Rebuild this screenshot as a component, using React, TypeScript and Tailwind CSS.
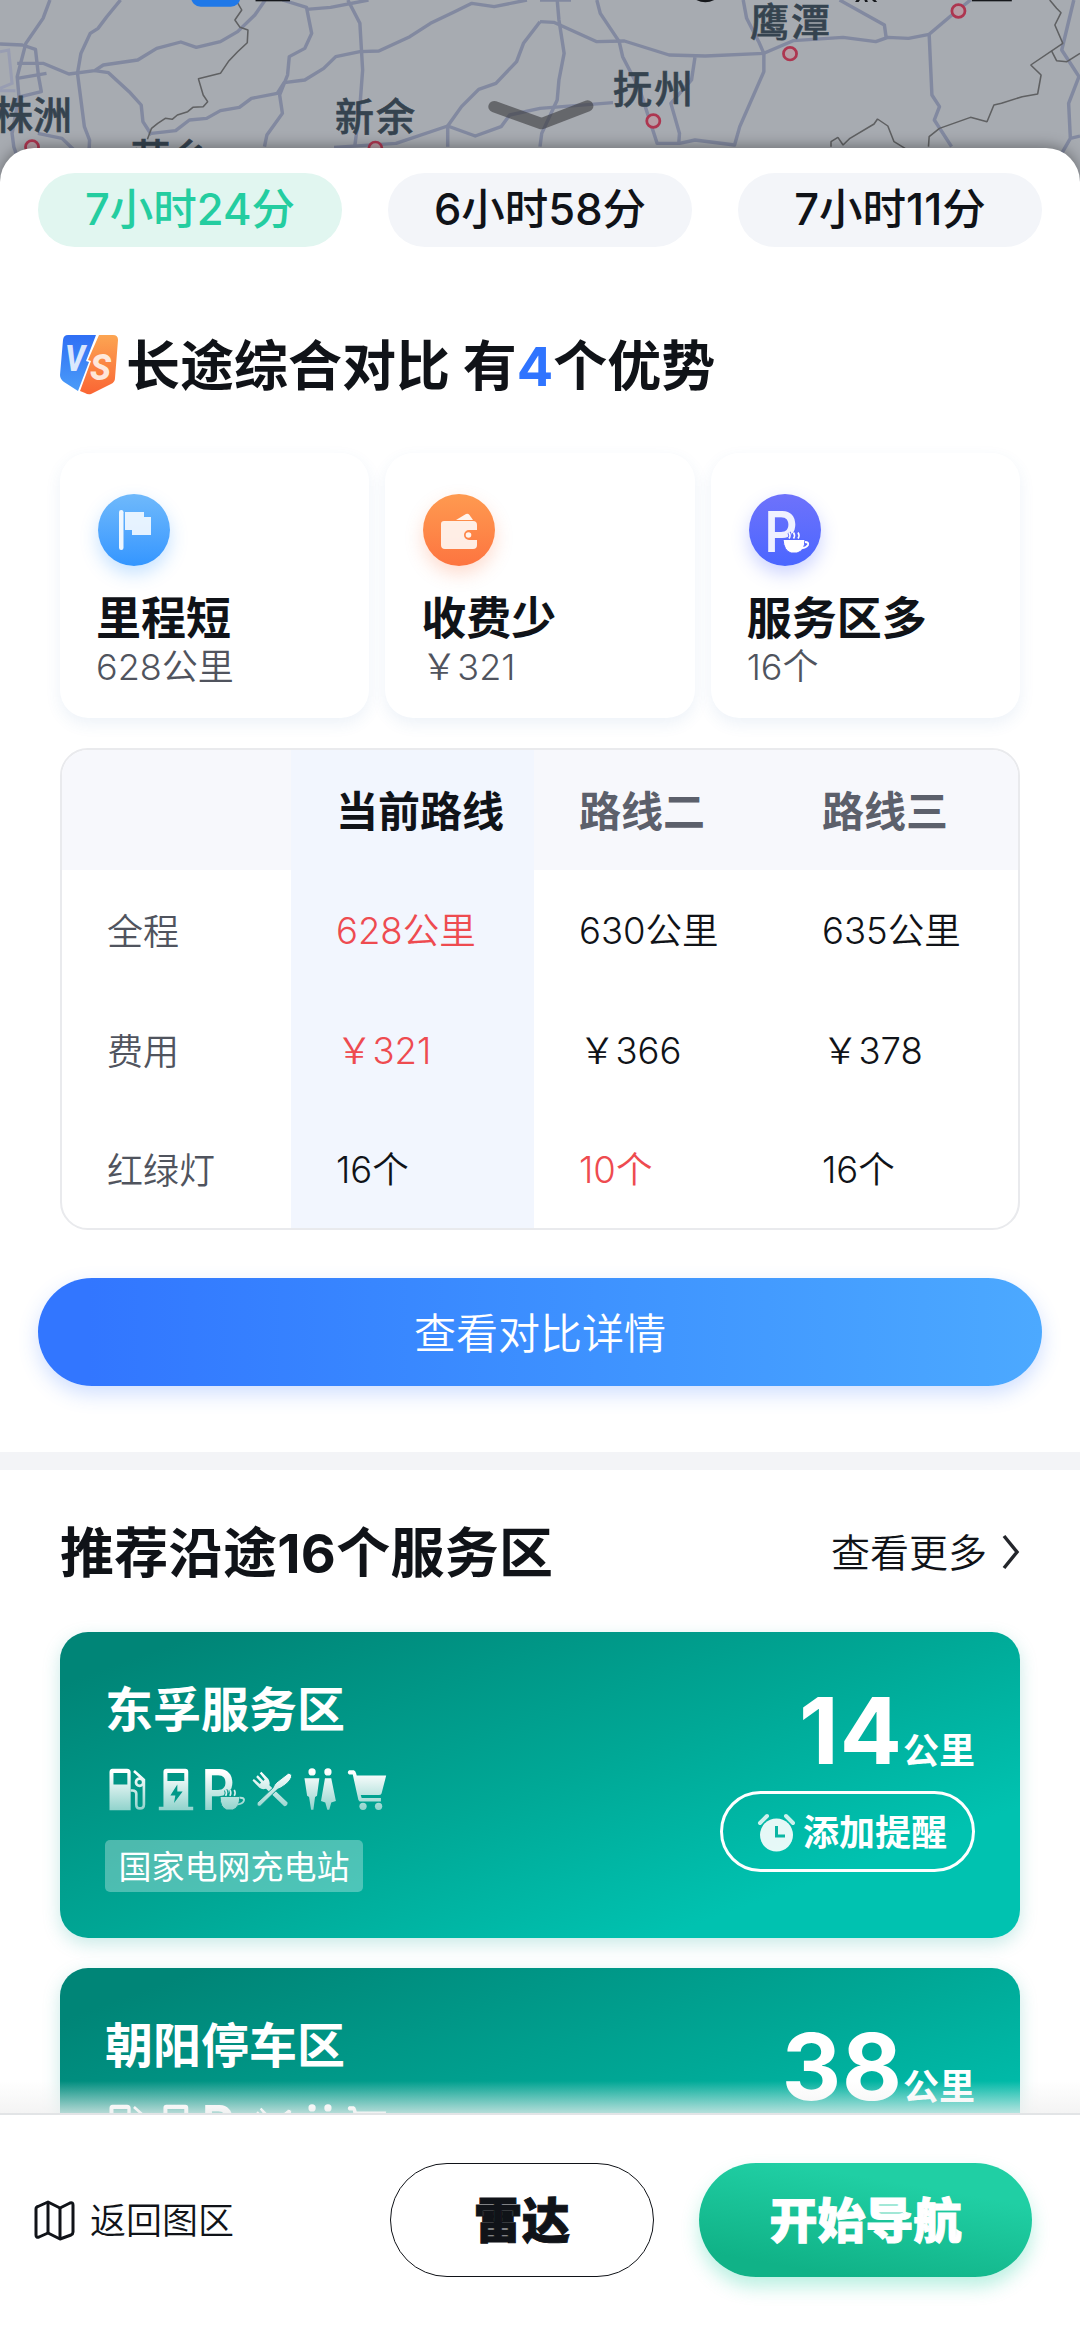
import type { ReactNode } from "react";

const durations = [
  { label: "7小时24分", active: true },
  { label: "6小时58分", active: false },
  { label: "7小时11分", active: false },
];

const tableRows = [
  { name: "全程", values: ["628公里", "630公里", "635公里"], best: 0 },
  { name: "费用", values: ["￥321", "￥366", "￥378"], best: 0 },
  { name: "红绿灯", values: ["16个", "10个", "16个"], best: 1 },
];

const serviceAreas: { name: string; distance: number; tag?: string }[] = [
  { name: "东孚服务区", distance: 14, tag: "国家电网充电站" },
  { name: "朝阳停车区", distance: 38 },
];

function MapBackground() {
  return (
    <div className="relative h-[190px] shrink-0 overflow-hidden bg-[#a7abb1]">
      <svg
        className="absolute inset-0 h-[190px] w-[1080px]"
        viewBox="0 0 3136 570"
        preserveAspectRatio="none"
        fill="none"
      >
        <g stroke="#8289a0" strokeWidth="10" strokeLinejoin="round">
          <path d="M145 0 L125 55 L75 130 L50 230 L55 290 L35 400 L40 440 L60 500" />
          <path d="M350 0 L310 50 L285 85 L262 100 L235 160 L225 220 L235 300 L245 380 L260 420 L258 470" />
          <path d="M0 132 L65 135 L103 148 L112 230 L120 275 L60 290" />
          <path d="M50 190 L125 190 L200 222 L275 212 L300 195 L400 180 L455 145 L525 126 L570 142 L640 125 L690 95 L740 45 L770 0" />
          <path d="M50 235 L135 220" />
          <path d="M275 212 L315 218 L375 275 L410 315 L415 365 L440 405" />
          <path d="M440 400 L510 392 L550 360 L600 355 L640 332 L695 322 L730 295 L805 280 L825 248 L885 240 L940 205 L975 170 L1045 155 L1100 153 L1190 110 L1250 70 L1320 35 L1370 10 L1435 20 L1530 0" />
          <path d="M820 0 L890 22 L905 100 L885 145 L840 170 L835 225 L812 285 L820 340 L775 405 L768 440" />
          <path d="M890 28 L960 22 L1070 0" />
          <path d="M1010 0 L1045 70 L1053 210 L1045 320 L1030 440" />
          <path d="M970 442 L1150 430 L1300 378 L1380 408 L1455 380 L1480 345 L1568 325 L1780 308" />
          <path d="M1300 440 V378 L1340 320 L1390 268 L1440 250 L1500 185 L1520 130 L1568 65" />
          <path d="M110 400 L180 415 L215 450" />
          <g transform="translate(1568 0)">
            <path d="M0 65 L40 67 L165 125 L245 123 L375 165 L480 168 L650 160 L735 122 L880 112 L975 125 L1010 112 L1070 115 L1130 103 L1190 50 L1250 0" />
            <path d="M50 0 L55 60 L70 160 L55 240 L50 300 L5 400 L0 440" />
            <path d="M0 0 L90 0 M165 0 L175 40 L230 125 L240 170 L290 270 L340 430 L405 430 L450 420 L565 435 L580 380 L650 215 L650 160 L635 125 L600 55 L590 0" />
            <path d="M450 172 L440 240 L380 310 L405 400 L403 430" />
            <path d="M870 0 L1000 75 L1005 112" />
            <path d="M1130 103 L1138 285 L1160 320 L1145 360 L1195 440" />
            <path d="M1550 0 L1515 150 L1565 230 L1535 310 L1540 415 L1515 460 M1540 415 L1568 408" />
          </g>
        </g>
        <g stroke="#989db2" strokeWidth="9">
          <path d="M0 155 L25 150 L35 250 L0 265 M0 272 H45" />
        </g>
        <g stroke="#5f6062" strokeWidth="4.500" strokeLinejoin="bevel">
          <path d="M685 0 L702 30 L682 60 L697 82 L720 90 L718 128 L690 155 L665 182 L640 220 L576 236 L590 285 L603 305 L590 320 L560 322 L545 335 L515 345 L500 358 L480 355 L458 370 L440 385 L428 418" />
          <g transform="translate(1568 0)">
            <path d="M1480 0 L1500 25 L1513 38 L1495 75 L1518 130 L1425 195 L1455 225 L1445 282 L1400 290 L1340 310 L1318 315 L1298 365 L1250 352 L1160 385 L1130 410 L1128 440" />
            <path d="M845 440 V425 L865 412 L880 435 L900 415 L970 372 L980 357 L1010 378 L1028 425 L1060 445" />
            <path d="M1485 152 L1500 182 L1530 185 L1568 160" />
          </g>
        </g>
        <path
          d="M1435 320 L1572 371 L1706 318"
          stroke="#3d3e40"
          strokeOpacity="0.62"
          strokeWidth="34"
          strokeLinecap="round"
          strokeLinejoin="round"
        />
        <g stroke="#ad3650" strokeWidth="8" fill="#b79ea6">
          <circle cx="93" cy="441" r="19" />
          <circle cx="1090" cy="445" r="19" />
          <circle cx="2294" cy="161" r="19" />
          <circle cx="1897" cy="363" r="19" />
          <circle cx="2783" cy="33" r="19" />
        </g>
        {/* lower edge of the status bar glyphs */}
        <rect x="555" y="-40" width="143" height="60" rx="28" fill="#1f78e8" />
        <g fill="#16181c">
          <rect x="742" y="0" width="100" height="4" />
          <path d="M2022 0 h52 q-26 14-52 0" />
          <rect x="2822" y="0" width="116" height="4" />
          <path d="M2487 0 h10 l-4 6 h-10z M2510 0 h8 l2 6 h-8z M2532 0 h10 l5 6 h-9z" />
        </g>
      </svg>
      <div className="text-[39px] leading-none font-medium text-[#35434f] [-webkit-text-stroke:0.6px_#35434f]">
        <span className="absolute top-[95px] -left-[6px]">株洲</span>
        <span className="absolute top-[138px] left-[131px]">萍乡</span>
        <span className="absolute top-[97px] left-[335px] tracking-[2px]">新余</span>
        <span className="absolute top-[69px] left-[613px] tracking-[2px]">抚州</span>
        <span className="absolute top-[2px] left-[750px] tracking-[2px]">鹰潭</span>
      </div>
    </div>
  );
}

function VsBadge() {
  return (
    <svg width="58" height="60" viewBox="0 0 58 60">
      <defs>
        <linearGradient id="vsBlue" x1="0" y1="0" x2="0" y2="1">
          <stop offset="0" stopColor="#2f6ff5" />
          <stop offset="1" stopColor="#4b9cf8" />
        </linearGradient>
        <linearGradient id="vsOrange" x1="0" y1="0" x2="0" y2="1">
          <stop offset="0" stopColor="#fca552" />
          <stop offset="1" stopColor="#fa6534" />
        </linearGradient>
      </defs>
      <path d="M8 0 H36 L26 26 L29 27 L18 56 L4 47 Q0 44 0 40 L3 5 Q3.500 0 8 0Z" fill="url(#vsBlue)" />
      <path d="M39 0 H53 Q58 0 58 5 L55 43 Q55 47 51 49 L31 59 Q28 60 25 58 L20 56 L31 26 L28 25Z" fill="url(#vsOrange)" />
      <g
        fill="#ffffff"
        fillOpacity="0.82"
        fontFamily="Roboto, sans-serif"
        fontWeight="800"
        fontStyle="italic"
      >
        <text x="5" y="36" fontSize="36" textLength="20" lengthAdjust="spacingAndGlyphs">V</text>
        <text x="30" y="45" fontSize="37" textLength="21" lengthAdjust="spacingAndGlyphs">S</text>
      </g>
    </svg>
  );
}

function FlagIcon() {
  return (
    <svg width="72" height="72" viewBox="0 0 72 72">
      <rect x="21" y="16" width="4.500" height="40" rx="2.200" fill="#fff" fillOpacity="0.9" />
      <path d="M27 18 H46 V23 H53 V41 H34 V36 H27Z" fill="#fff" fillOpacity="0.85" />
    </svg>
  );
}

function WalletIcon() {
  return (
    <svg width="72" height="72" viewBox="0 0 72 72" fill="#fff">
      <path d="M33 26 L43 20 Q45 19 46.500 21 L50 26Z" fillOpacity="0.9" />
      <path
        d="M21 27 H50 Q54 27 54 31 V36 H46 A5 5 0 0 0 46 46 H54 V51 Q54 55 50 55 H22 Q18 55 18 51 V30 Q18 27 21 27Z"
        fillOpacity="0.86"
      />
      <circle cx="45.500" cy="41" r="2.800" fillOpacity="0.9" />
    </svg>
  );
}

function ParkingIcon() {
  return (
    <svg width="72" height="72" viewBox="0 0 72 72" fill="#fff">
      <text x="15.500" y="57.500" fontSize="56" fontWeight="600" fontFamily="Inter, sans-serif" fillOpacity="0.9" textLength="33" lengthAdjust="spacingAndGlyphs">
        P
      </text>
      <path d="M34 45.500 H56 Q56 57 48 59 H42 Q35 57 34 45.500Z" stroke="#5468ff" strokeWidth="1" />
      <path d="M56 48 q4 0 3 3 q-2 3 -6 3" fill="none" stroke="#fff" strokeWidth="1.800" />
      <path d="M40 44.500 q2-3 0-6 M44.500 44.500 q2-3 0-6 M49 44.500 q2-3 0-6" fill="none" stroke="#5c6afd" strokeWidth="3.500" />
      <path d="M40 44.500 q2-3 0-6 M44.500 44.500 q2-3 0-6 M49 44.500 q2-3 0-6" fill="none" stroke="#fff" strokeWidth="1.600" />
    </svg>
  );
}

const highlights: { title: string; value: string; icon: ReactNode; circle: string }[] = [
  {
    title: "里程短",
    value: "628公里",
    icon: <FlagIcon />,
    circle: "from-[#6fb9fb] to-[#3396ff] shadow-[0_8px_18px_rgba(51,150,255,0.28)]",
  },
  {
    title: "收费少",
    value: "￥321",
    icon: <WalletIcon />,
    circle: "from-[#fe9a50] to-[#fd7440] shadow-[0_8px_18px_rgba(253,116,64,0.25)]",
  },
  {
    title: "服务区多",
    value: "16个",
    icon: <ParkingIcon />,
    circle: "from-[#6e72fb] to-[#4a66ff] shadow-[0_8px_18px_rgba(74,102,255,0.28)]",
  },
];

function AmenityIcons() {
  return (
    <div className="flex h-[43px]">
      <svg width="50" height="43" viewBox="0 0 150 130" fill="url(#amenity)">
        <path fillRule="evenodd" d="M22 2 H66 Q77 2 77 13 V128 H13 V13 Q13 2 22 2Z M25 15 V50 H67 V15Z" />
        <path
          d="M87 9 L117 36 V110 Q117 122 105 122 Q94 122 94 110 V78 Q94 68 82 68 H77"
          fill="none"
          stroke="url(#amenity)"
          strokeWidth="8"
        />
        <circle cx="104" cy="43" r="11" fill="none" stroke="url(#amenity)" strokeWidth="8" />
      </svg>
      <svg width="45" height="43" viewBox="0 0 135 130" fill="url(#amenity)">
        <path
          fillRule="evenodd"
          d="M34 2 H91 Q100 2 100 11 V117 H115 V128 H11 V117 H25 V11 Q25 2 34 2Z M37 15 V39 H88 V15Z M67 50 L46 83 H61 L57 106 L83 71 H67Z"
        />
      </svg>
      <svg width="49" height="43" viewBox="0 0 147 130" fill="url(#amenity)">
        <text
          x="4"
          y="128"
          fontSize="172"
          fontWeight="600"
          fontFamily="Inter, sans-serif"
          textLength="100"
          lengthAdjust="spacingAndGlyphs"
        >
          P
        </text>
        <path d="M60 86 H120 Q119 120 99 127 H80 Q60 120 60 86Z" stroke="#05998b" strokeWidth="3" />
        <path d="M119 90 q16-1 13 9 q-4 10 -19 11" fill="none" stroke="url(#amenity)" strokeWidth="6" />
        <path d="M77 84 q5-9 0-18 M90 84 q5-9 0-18 M103 84 q5-9 0-18" fill="none" stroke="#05998b" strokeWidth="11" />
        <path d="M77 84 q5-9 0-18 M90 84 q5-9 0-18 M103 84 q5-9 0-18" fill="none" stroke="#d9f1ef" strokeWidth="5" />
      </svg>
      <svg width="49" height="43" viewBox="0 0 147 130" fill="url(#amenity)">
        <path d="M10 38 L14 33 L32 48 L36 44 L21 27 L26 22 L43 39 L47 35 L32 16 L37 11 L58 33 Q64 44 61 52 L116 104 Q117 113 106 116 L51 63 Q39 67 31 60Z" />
        <path
          d="M118 16 Q130 16 128 28 Q122 44 96 60 L85 65 L33 116 Q22 116 24 105 L72 60 Q75 50 84 42Z"
          stroke="#05998b"
          strokeWidth="3"
        />
      </svg>
      <svg width="45" height="43" viewBox="0 0 135 130" fill="url(#amenity)">
        <circle cx="42" cy="12" r="11" />
        <circle cx="90" cy="12" r="11" />
        <path d="M19 31 H64 L57 84 L51 88 L46 126 H39 L33 88 L27 84Z" />
        <path d="M81 31 H100 L114 100 L100 104 L94 126 H88 L82 104 L69 100Z" />
      </svg>
      <svg width="47" height="43" viewBox="0 0 141 130" fill="url(#amenity)">
        <path d="M18 7 H32 Q37 8 39 16 L41 23 H130 L116 77 Q114 82 108 82 H53 L56 91 H114 V101 H50 L46 97 L29 20 H18 Q10 13 18 7Z" />
        <circle cx="60" cy="116" r="11" />
        <circle cx="107" cy="116" r="11" />
      </svg>
    </div>
  );
}

function AlarmIcon() {
  return (
    <svg width="39" height="40" viewBox="0 0 39 40">
      <circle cx="19.500" cy="22" r="16.500" fill="#fff" fillOpacity="0.9" />
      <path d="M3 10 L10 3 M29 3 L36 10" stroke="#fff" strokeOpacity="0.8" strokeWidth="4" strokeLinecap="round" />
      <path d="M19.500 13 V23 H28" fill="none" stroke="#0bb5a3" strokeWidth="3" />
    </svg>
  );
}

function ServiceCard({ name, distance, tag }: { name: string; distance: number; tag?: string }) {
  return (
    <div className="flex h-[306px] shrink-0 justify-between rounded-[28px] bg-[linear-gradient(160deg,#008577_8%,#00a896_50%,#00c2b0_80%)] px-[45px] pt-[50px] text-white shadow-[0_6px_18px_rgba(0,160,145,0.22)]">
      <div>
        <h3 className="flex h-[54px] items-center pt-[2px] text-[48px] leading-none font-bold">{name}</h3>
        <div className="mt-8">
          <AmenityIcons />
        </div>
        {tag && (
          <div className="mt-[29px] flex h-[52px] w-[258px] items-center justify-center rounded-[5px] bg-white/30 pt-[2px] text-[33px] leading-none">
            {tag}
          </div>
        )}
      </div>
      <div className="flex flex-col items-end">
        <div className="flex h-[109px] items-baseline font-bold">
          <span className="text-[92px] leading-[97px] tracking-[1px]">{distance}</span>
          <span className="text-[36px] leading-none">公里</span>
        </div>
        <button className="flex h-[81px] w-[255px] items-center justify-center gap-[7px] rounded-full border-[3px] border-white pt-[2px] pl-[9px] text-[36px] leading-none font-bold">
          <AlarmIcon />
          添加提醒
        </button>
      </div>
    </div>
  );
}

function Comparison() {
  return (
    <div className="mt-[30px] grid h-[482px] grid-cols-[229px_243px_243px_1fr] grid-rows-[120px_120px_120px_1fr] overflow-hidden rounded-[28px] border-2 border-[#e9eaed] text-[36.500px] leading-none">
      <div className="bg-[#f7f8fc]" />
      <div className="flex items-center bg-[#f2f6fe] pt-[3px] pl-[45px] text-[42px] font-bold text-[#101318]">
        当前路线
      </div>
      <div className="flex items-center bg-[#f7f8fc] pt-[3px] pl-[45px] text-[42px] font-bold text-[#5c606b]">
        路线二
      </div>
      <div className="flex items-center bg-[#f7f8fc] pt-[3px] pl-[45px] text-[42px] font-bold text-[#5c606b]">
        路线三
      </div>
      {tableRows.map((row) => (
        <div key={row.name} className="contents">
          <div className="flex items-center pt-[3px] pl-[45px] text-[36px] font-[350] text-[#50545e]">{row.name}</div>
          {row.values.map((value, i) => (
            <div
              key={i}
              className={`flex items-center pt-[2px] pl-[45px] font-[350] ${i === 0 ? "bg-[#f2f6fe]" : ""} ${
                row.best === i ? "text-[#ee4b50]" : "text-[#101318]"
              }`}
            >
              {value}
            </div>
          ))}
        </div>
      ))}
    </div>
  );
}

function BottomBar() {
  return (
    <footer className="relative flex h-[224px] shrink-0 items-start border-t-2 border-[#e2e4e6] bg-white pt-12 pl-[33px] text-[#101318]">
      <div className="flex h-[114px] w-[357px] items-center gap-[15px] text-[36px] leading-none font-[350]">
        <svg width="42" height="42" viewBox="0 0 42 42" fill="none" stroke="#101318" strokeWidth="3" strokeLinejoin="round">
          <path d="M3 10 Q3 8 5 7.500 L15 3 L27 9 L37 4 Q40 3 40 6 V33 Q40 35 38 36 L27 40 L15 34 L6 38 Q3 39 3 36Z" />
          <path d="M15 3 V34 M27 9 V40" />
        </svg>
        <span className="pt-[2px]">返回图区</span>
      </div>
      <button className="h-[114px] w-[264px] rounded-full border border-[#101318] pt-[2px] text-[48px] leading-none font-black [-webkit-text-stroke:1px_#101318]">
        雷达
      </button>
      <button className="ml-[45px] h-[114px] w-[333px] rounded-full bg-linear-190 from-[#20cfa4] from-25% to-[#10b287] to-85% pt-[2px] text-[48px] leading-none font-black text-white shadow-[0_10px_18px_rgba(30,205,160,0.3)] [-webkit-text-stroke:1px_#fff]">
        开始导航
      </button>
    </footer>
  );
}

export default function App() {
  return (
    <div className="flex h-[2337px] w-[1080px] flex-col overflow-hidden bg-white font-['Inter','Noto_Sans_CJK_SC',sans-serif] text-[#101318]">
      <svg className="absolute size-0">
        <linearGradient id="amenity" gradientUnits="userSpaceOnUse" x1="0" y1="0" x2="0" y2="130">
          <stop offset="0.1" stopColor="#fff" />
          <stop offset="1" stopColor="#8ed2cb" />
        </linearGradient>
      </svg>
      <MapBackground />

      <main className="relative -mt-[42px] flex min-h-0 flex-1 flex-col rounded-t-[34px] bg-white pt-[25px] shadow-[0_-2px_14px_rgba(0,0,0,0.35)]">
        <div className="flex h-[74px] shrink-0 justify-between px-[38px]">
          {durations.map((d) => (
            <button
              key={d.label}
              className={`w-[304px] rounded-full text-[43.500px] leading-none font-medium ${
                d.active ? "bg-[#e1f6f0] text-[#24cda0]" : "bg-[#f3f5f9]"
              }`}
            >
              {d.label}
            </button>
          ))}
        </div>

        <section className="shrink-0 px-[60px]">
          <h2 className="mt-[88px] mb-[58px] flex h-[60px] items-center gap-2 text-[54px] leading-none font-bold">
            <VsBadge />
            <span className="pt-[4px]">
              长途综合对比 有<span className="text-[#2f74ff]">4</span>个优势
            </span>
          </h2>
          <div className="grid grid-cols-3 gap-4">
            {highlights.map((h) => (
              <div
                key={h.title}
                className="h-[265px] rounded-[28px] bg-white pt-[41px] pl-[38px] shadow-[0_6px_16px_rgba(60,110,180,0.09)]"
              >
                <div className={`size-[72px] rounded-full bg-linear-to-b ${h.circle}`}>{h.icon}</div>
                <div className="mt-[28px] -ml-[2px] flex h-12 items-center text-[45px] leading-none font-bold">{h.title}</div>
                <div className="mt-[5px] -ml-[2px] flex h-10 items-center text-[36px] leading-none font-[350] text-[#50545e]">
                  {h.value}
                </div>
              </div>
            ))}
          </div>
          <Comparison />
        </section>

        <button className="mx-[38px] mt-12 h-[108px] shrink-0 rounded-full bg-linear-to-r from-[#3276ff] from-5% to-[#4ca9ff] pt-[4px] text-[42px] leading-none font-[350] text-white shadow-[0_8px_20px_rgba(60,120,255,0.24)]">
          查看对比详情
        </button>
        <div className="mt-[66px] h-[18px] shrink-0 bg-[#f3f4f7]" />

        <section className="flex min-h-0 flex-1 flex-col gap-[30px] overflow-hidden px-[60px] pt-[52px]">
          <div className="mb-5 flex h-[60px] shrink-0 items-center justify-between">
            <h2 className="pt-[3px] text-[54px] leading-none font-bold tracking-[0.3px]">推荐沿途16个服务区</h2>
            <div className="flex items-center gap-[15px] text-[39px] leading-none font-[350]">
              查看更多
              <svg width="18" height="36" viewBox="0 0 18 36" fill="none" stroke="#24262b" strokeWidth="3.500">
                <path d="M2 2 L15 18 L2 34" />
              </svg>
            </div>
          </div>
          {serviceAreas.map((area) => (
            <ServiceCard key={area.name} {...area} />
          ))}
        </section>
        <div className="absolute inset-x-0 bottom-0 h-8 bg-linear-to-b from-transparent to-[#f0f0f0]/75" />
      </main>

      <BottomBar />
    </div>
  );
}
